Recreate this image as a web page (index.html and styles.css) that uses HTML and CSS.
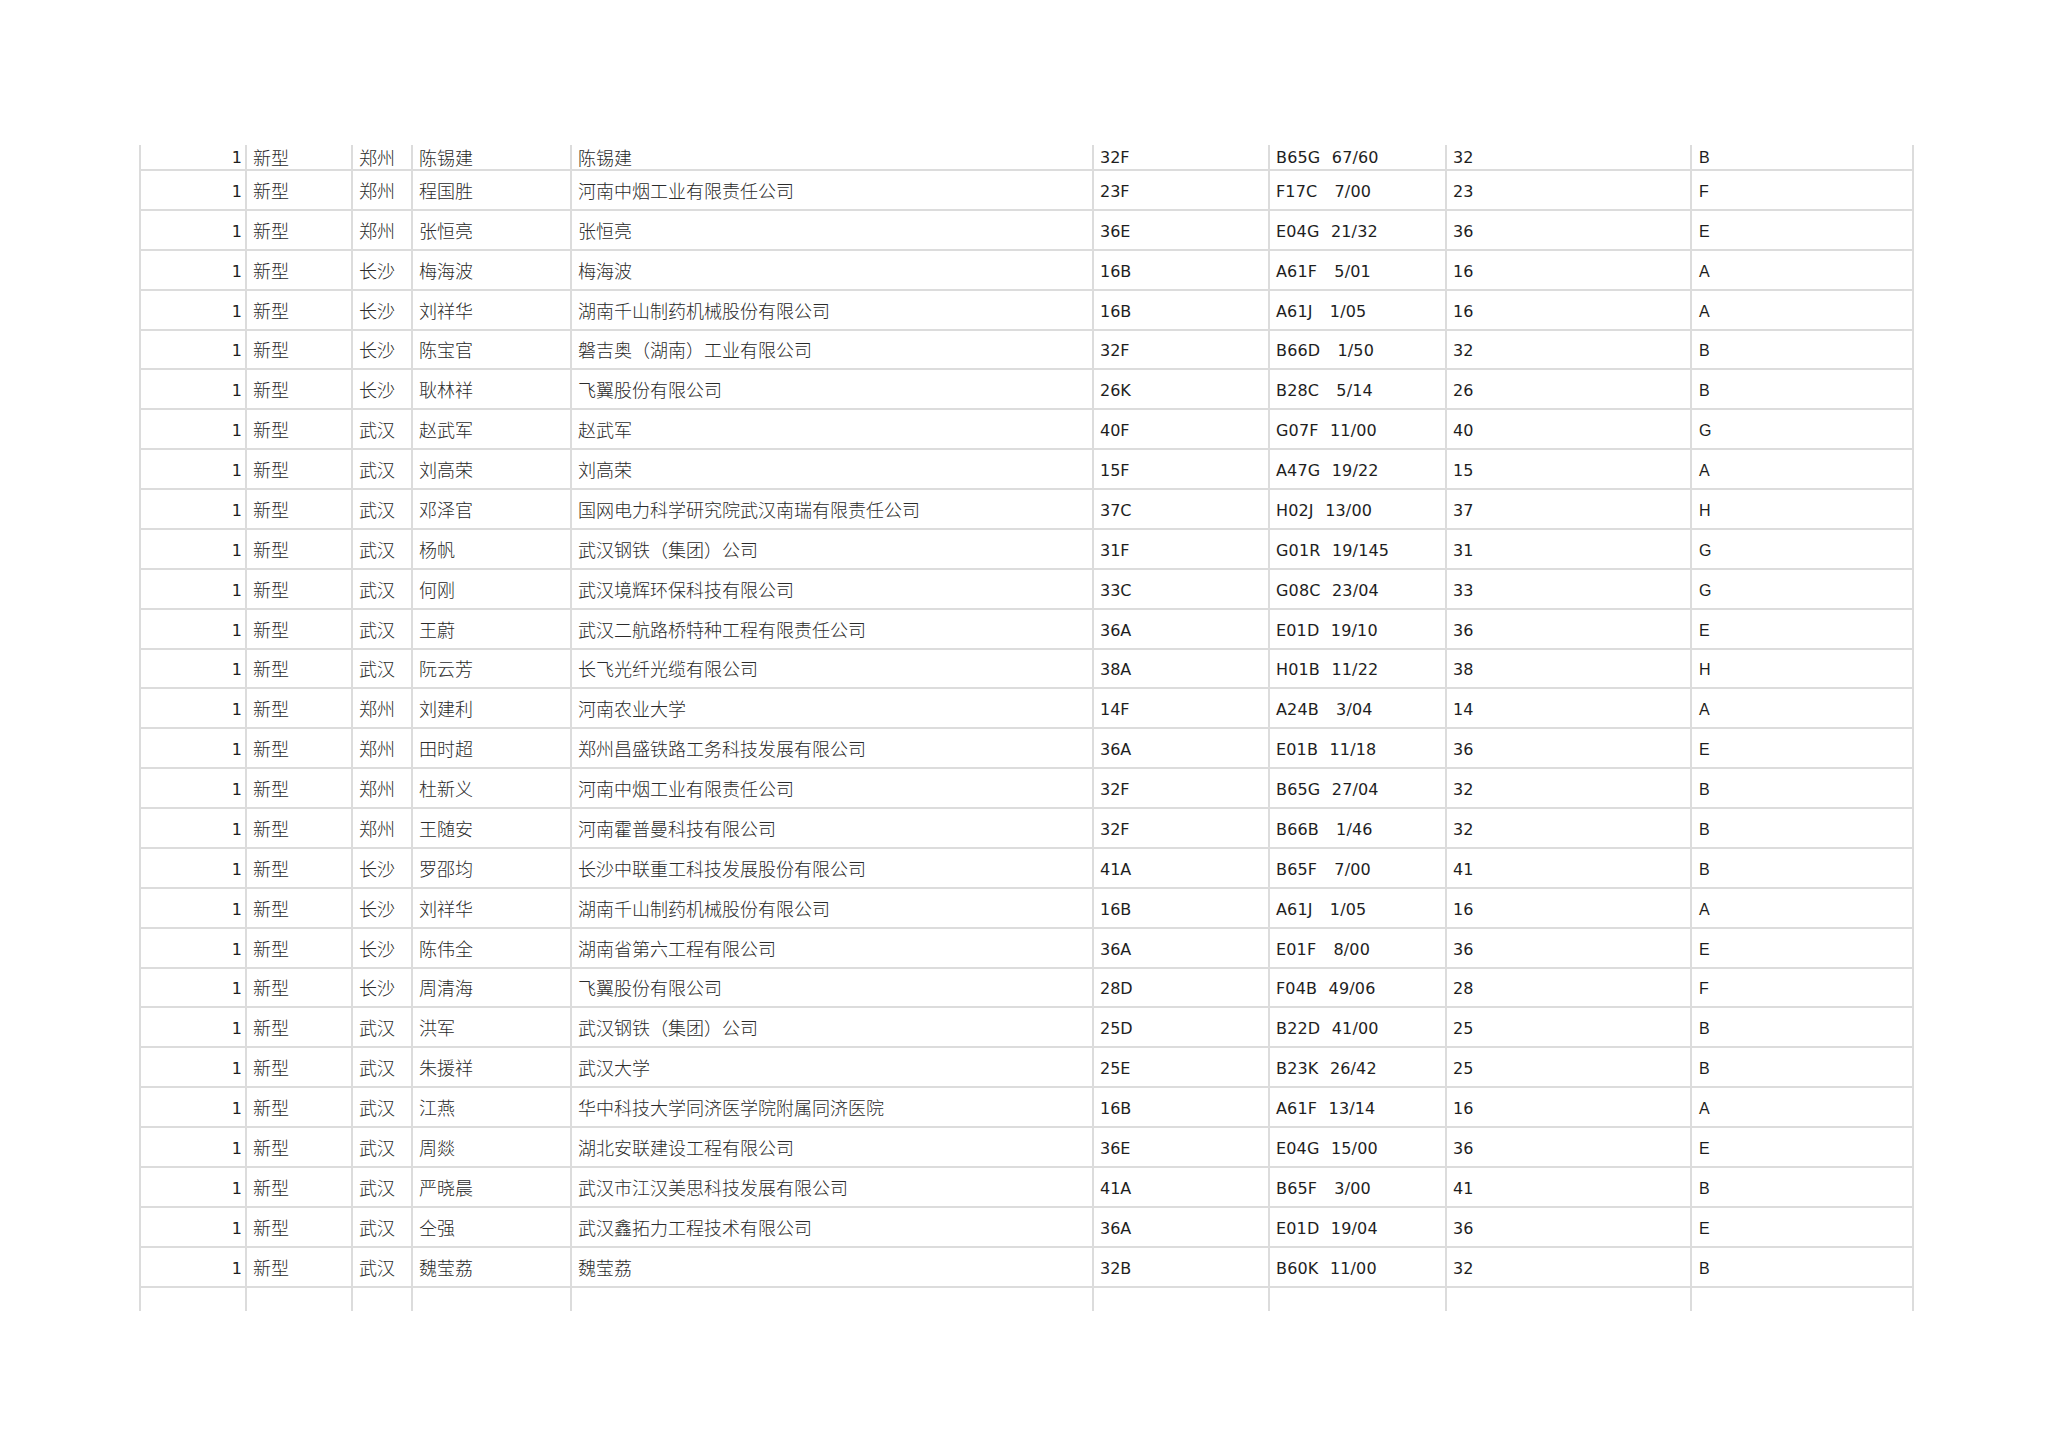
FILE: index.html
```html
<!DOCTYPE html>
<html lang="zh">
<head>
<meta charset="utf-8">
<title>专利表</title>
<link rel="stylesheet" href="styles.css">
</head>
<body>
<div class="sheet">
  <div class="row first"><div class="c n">1</div><div class="c z">新型</div><div class="c z">郑州</div><div class="c z">陈锡建</div><div class="c z">陈锡建</div><div class="c l">32F</div><div class="c l code">B65G  67/60</div><div class="c l">32</div><div class="c s">B</div></div>
  <div class="row"><div class="c n">1</div><div class="c z">新型</div><div class="c z">郑州</div><div class="c z">程国胜</div><div class="c z">河南中烟工业有限责任公司</div><div class="c l">23F</div><div class="c l code">F17C   7/00</div><div class="c l">23</div><div class="c s">F</div></div>
  <div class="row"><div class="c n">1</div><div class="c z">新型</div><div class="c z">郑州</div><div class="c z">张恒亮</div><div class="c z">张恒亮</div><div class="c l">36E</div><div class="c l code">E04G  21/32</div><div class="c l">36</div><div class="c s">E</div></div>
  <div class="row"><div class="c n">1</div><div class="c z">新型</div><div class="c z">长沙</div><div class="c z">梅海波</div><div class="c z">梅海波</div><div class="c l">16B</div><div class="c l code">A61F   5/01</div><div class="c l">16</div><div class="c s">A</div></div>
  <div class="row"><div class="c n">1</div><div class="c z">新型</div><div class="c z">长沙</div><div class="c z">刘祥华</div><div class="c z">湖南千山制药机械股份有限公司</div><div class="c l">16B</div><div class="c l code">A61J   1/05</div><div class="c l">16</div><div class="c s">A</div></div>
  <div class="row"><div class="c n">1</div><div class="c z">新型</div><div class="c z">长沙</div><div class="c z">陈宝官</div><div class="c z">磐吉奥（湖南）工业有限公司</div><div class="c l">32F</div><div class="c l code">B66D   1/50</div><div class="c l">32</div><div class="c s">B</div></div>
  <div class="row"><div class="c n">1</div><div class="c z">新型</div><div class="c z">长沙</div><div class="c z">耿林祥</div><div class="c z">飞翼股份有限公司</div><div class="c l">26K</div><div class="c l code">B28C   5/14</div><div class="c l">26</div><div class="c s">B</div></div>
  <div class="row"><div class="c n">1</div><div class="c z">新型</div><div class="c z">武汉</div><div class="c z">赵武军</div><div class="c z">赵武军</div><div class="c l">40F</div><div class="c l code">G07F  11/00</div><div class="c l">40</div><div class="c s">G</div></div>
  <div class="row"><div class="c n">1</div><div class="c z">新型</div><div class="c z">武汉</div><div class="c z">刘高荣</div><div class="c z">刘高荣</div><div class="c l">15F</div><div class="c l code">A47G  19/22</div><div class="c l">15</div><div class="c s">A</div></div>
  <div class="row"><div class="c n">1</div><div class="c z">新型</div><div class="c z">武汉</div><div class="c z">邓泽官</div><div class="c z">国网电力科学研究院武汉南瑞有限责任公司</div><div class="c l">37C</div><div class="c l code">H02J  13/00</div><div class="c l">37</div><div class="c s">H</div></div>
  <div class="row"><div class="c n">1</div><div class="c z">新型</div><div class="c z">武汉</div><div class="c z">杨帆</div><div class="c z">武汉钢铁（集团）公司</div><div class="c l">31F</div><div class="c l code">G01R  19/145</div><div class="c l">31</div><div class="c s">G</div></div>
  <div class="row"><div class="c n">1</div><div class="c z">新型</div><div class="c z">武汉</div><div class="c z">何刚</div><div class="c z">武汉境辉环保科技有限公司</div><div class="c l">33C</div><div class="c l code">G08C  23/04</div><div class="c l">33</div><div class="c s">G</div></div>
  <div class="row"><div class="c n">1</div><div class="c z">新型</div><div class="c z">武汉</div><div class="c z">王蔚</div><div class="c z">武汉二航路桥特种工程有限责任公司</div><div class="c l">36A</div><div class="c l code">E01D  19/10</div><div class="c l">36</div><div class="c s">E</div></div>
  <div class="row"><div class="c n">1</div><div class="c z">新型</div><div class="c z">武汉</div><div class="c z">阮云芳</div><div class="c z">长飞光纤光缆有限公司</div><div class="c l">38A</div><div class="c l code">H01B  11/22</div><div class="c l">38</div><div class="c s">H</div></div>
  <div class="row"><div class="c n">1</div><div class="c z">新型</div><div class="c z">郑州</div><div class="c z">刘建利</div><div class="c z">河南农业大学</div><div class="c l">14F</div><div class="c l code">A24B   3/04</div><div class="c l">14</div><div class="c s">A</div></div>
  <div class="row"><div class="c n">1</div><div class="c z">新型</div><div class="c z">郑州</div><div class="c z">田时超</div><div class="c z">郑州昌盛铁路工务科技发展有限公司</div><div class="c l">36A</div><div class="c l code">E01B  11/18</div><div class="c l">36</div><div class="c s">E</div></div>
  <div class="row"><div class="c n">1</div><div class="c z">新型</div><div class="c z">郑州</div><div class="c z">杜新义</div><div class="c z">河南中烟工业有限责任公司</div><div class="c l">32F</div><div class="c l code">B65G  27/04</div><div class="c l">32</div><div class="c s">B</div></div>
  <div class="row"><div class="c n">1</div><div class="c z">新型</div><div class="c z">郑州</div><div class="c z">王随安</div><div class="c z">河南霍普曼科技有限公司</div><div class="c l">32F</div><div class="c l code">B66B   1/46</div><div class="c l">32</div><div class="c s">B</div></div>
  <div class="row"><div class="c n">1</div><div class="c z">新型</div><div class="c z">长沙</div><div class="c z">罗邵均</div><div class="c z">长沙中联重工科技发展股份有限公司</div><div class="c l">41A</div><div class="c l code">B65F   7/00</div><div class="c l">41</div><div class="c s">B</div></div>
  <div class="row"><div class="c n">1</div><div class="c z">新型</div><div class="c z">长沙</div><div class="c z">刘祥华</div><div class="c z">湖南千山制药机械股份有限公司</div><div class="c l">16B</div><div class="c l code">A61J   1/05</div><div class="c l">16</div><div class="c s">A</div></div>
  <div class="row"><div class="c n">1</div><div class="c z">新型</div><div class="c z">长沙</div><div class="c z">陈伟全</div><div class="c z">湖南省第六工程有限公司</div><div class="c l">36A</div><div class="c l code">E01F   8/00</div><div class="c l">36</div><div class="c s">E</div></div>
  <div class="row"><div class="c n">1</div><div class="c z">新型</div><div class="c z">长沙</div><div class="c z">周清海</div><div class="c z">飞翼股份有限公司</div><div class="c l">28D</div><div class="c l code">F04B  49/06</div><div class="c l">28</div><div class="c s">F</div></div>
  <div class="row"><div class="c n">1</div><div class="c z">新型</div><div class="c z">武汉</div><div class="c z">洪军</div><div class="c z">武汉钢铁（集团）公司</div><div class="c l">25D</div><div class="c l code">B22D  41/00</div><div class="c l">25</div><div class="c s">B</div></div>
  <div class="row"><div class="c n">1</div><div class="c z">新型</div><div class="c z">武汉</div><div class="c z">朱援祥</div><div class="c z">武汉大学</div><div class="c l">25E</div><div class="c l code">B23K  26/42</div><div class="c l">25</div><div class="c s">B</div></div>
  <div class="row"><div class="c n">1</div><div class="c z">新型</div><div class="c z">武汉</div><div class="c z">江燕</div><div class="c z">华中科技大学同济医学院附属同济医院</div><div class="c l">16B</div><div class="c l code">A61F  13/14</div><div class="c l">16</div><div class="c s">A</div></div>
  <div class="row"><div class="c n">1</div><div class="c z">新型</div><div class="c z">武汉</div><div class="c z">周燚</div><div class="c z">湖北安联建设工程有限公司</div><div class="c l">36E</div><div class="c l code">E04G  15/00</div><div class="c l">36</div><div class="c s">E</div></div>
  <div class="row"><div class="c n">1</div><div class="c z">新型</div><div class="c z">武汉</div><div class="c z">严晓晨</div><div class="c z">武汉市江汉美思科技发展有限公司</div><div class="c l">41A</div><div class="c l code">B65F   3/00</div><div class="c l">41</div><div class="c s">B</div></div>
  <div class="row"><div class="c n">1</div><div class="c z">新型</div><div class="c z">武汉</div><div class="c z">仝强</div><div class="c z">武汉鑫拓力工程技术有限公司</div><div class="c l">36A</div><div class="c l code">E01D  19/04</div><div class="c l">36</div><div class="c s">E</div></div>
  <div class="row"><div class="c n">1</div><div class="c z">新型</div><div class="c z">武汉</div><div class="c z">魏莹荔</div><div class="c z">魏莹荔</div><div class="c l">32B</div><div class="c l code">B60K  11/00</div><div class="c l">32</div><div class="c s">B</div></div>
  <div class="row tail"><div class="c"></div><div class="c"></div><div class="c"></div><div class="c"></div><div class="c"></div><div class="c"></div><div class="c"></div><div class="c"></div><div class="c"></div></div>
</div>
</body>
</html>
```
FILE: styles.css
```css
html, body {
  margin: 0;
  padding: 0;
  background: #ffffff;
}

body {
  color: #1e1e1e;
  font-family: "DejaVu Sans", "Noto Sans CJK SC", sans-serif;
}

.sheet {
  margin: 145px 0 0 139px;
  width: 1775px;
}

.row {
  display: grid;
  grid-template-columns: 106px 106px 60px 159px 522px 176px 177px 245px 224px;
  height: 39.89px;
  box-sizing: border-box;
  border-bottom: 2px solid #dcdcdc;
}

.row.first {
  height: 26px;
}

.row.tail {
  height: 23px;
  border-bottom: none;
}

.c {
  box-sizing: border-box;
  border-left: 2px solid #dcdcdc;
  display: flex;
  align-items: center;
  padding-left: 6px;
  white-space: pre;
  overflow: hidden;
  line-height: 1;
}

.c:last-child {
  border-right: 2px solid #dcdcdc;
}

.n {
  justify-content: flex-end;
  padding-left: 0;
  padding-right: 3px;
  padding-top: 4px;
  font-family: "DejaVu Sans", sans-serif;
  font-size: 16px;
}

.z {
  font-family: "Noto Sans CJK SC", sans-serif;
  font-weight: 300;
  font-size: 18px;
  color: #2a2a2a;
  padding-left: 6px;
}

.l {
  font-family: "DejaVu Sans", sans-serif;
  font-size: 16px;
  padding-top: 4px;
}

.code {
  letter-spacing: 0.15px;
  word-spacing: 0.5px;
}

.s {
  font-family: "Liberation Sans", Arial, sans-serif;
  font-size: 16px;
  padding-left: 7px;
  padding-top: 4px;
}

.row.first .n,
.row.first .l,
.row.first .s {
  padding-top: 2px;
}
```
